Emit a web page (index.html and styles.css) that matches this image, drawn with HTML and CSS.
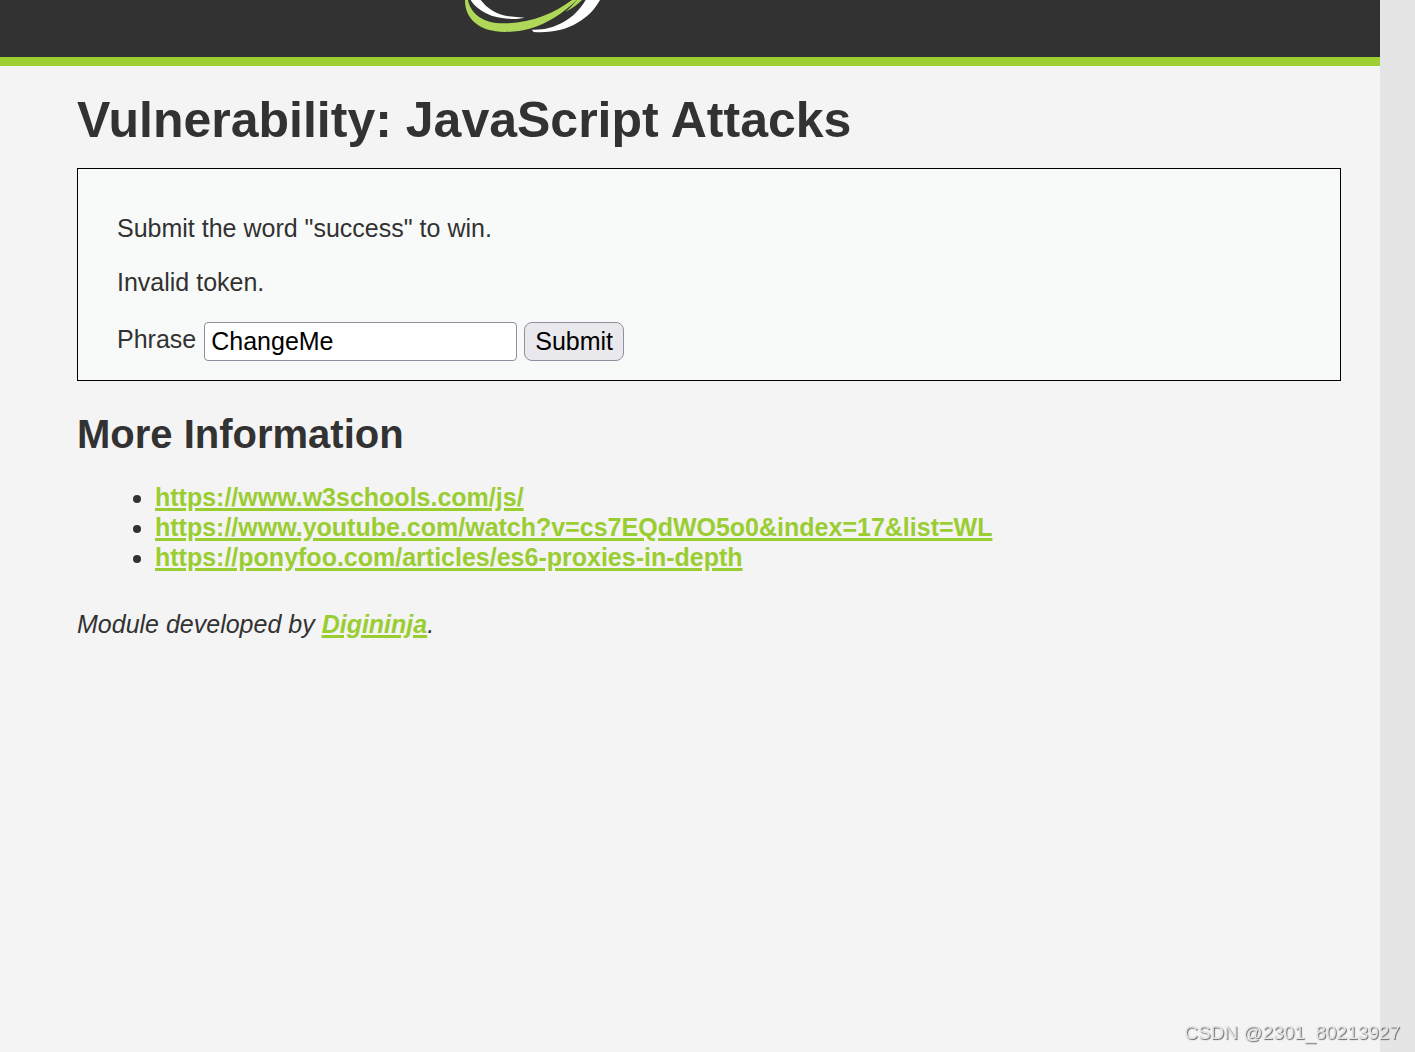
FILE: index.html
```html
<!DOCTYPE html>
<html lang="en">
<head>
<meta charset="utf-8">
<meta name="viewport" content="width=device-width, initial-scale=1">
<title>Vulnerability: JavaScript Attacks</title>
<link rel="stylesheet" href="styles.css">
</head>
<body>
<div class="page">
  <header class="header">
    <svg class="logo" viewBox="0 0 510 99" aria-hidden="true">
      <path fill="#fff" d="M62 0H92C112 26 140 44 176 49L224 53C190 60 142 58 108 40C86 28 70 14 62 0Z"/>
      <path fill="#b0d858" d="M45 0H54C62 42 100 70 160 70C240 70 308 43 366 0H381C330 48 262 96 164 96C90 96 44 58 45 0Z"/>
      <path fill="#b0d858" d="M381 0H396C382 14 366 26 346 36C360 24 370 14 381 0Z"/>
      <path fill="#fff" d="M407 0H450C418 58 350 103 251 96L245 89C310 92 372 60 407 0Z"/>
    </svg>
  </header>
  <main class="content">
    <h1 class="title">Vulnerability: JavaScript Attacks</h1>
    <section class="panel">
      <p class="text">Submit the word "success" to win.</p>
      <p class="text">Invalid token.</p>
      <form class="form">
        <label class="label" for="phrase">Phrase</label>
        <input class="input" type="text" id="phrase" name="phrase" value="ChangeMe">
        <button class="button" type="submit">Submit</button>
      </form>
    </section>
    <h2 class="subtitle">More Information</h2>
    <ul class="links">
      <li><a class="link" href="https://www.w3schools.com/js/">https://www.w3schools.com/js/</a></li>
      <li><a class="link" href="https://www.youtube.com/watch?v=cs7EQdWO5o0&amp;index=17&amp;list=WL">https://www.youtube.com/watch?v=cs7EQdWO5o0&amp;index=17&amp;list=WL</a></li>
      <li><a class="link" href="https://ponyfoo.com/articles/es6-proxies-in-depth">https://ponyfoo.com/articles/es6-proxies-in-depth</a></li>
    </ul>
    <p class="credit">Module developed by <a class="link" href="https://digi.ninja">Digininja</a>.</p>
  </main>
</div>
<div class="watermark">CSDN @2301_80213927</div>
</body>
</html>
```
FILE: styles.css
```css
* {
  box-sizing: border-box;
}

body {
  margin: 0;
  padding-right: 35px;
  background: #e5e5e5;
  color: #323232;
  font: 25px/30px "Liberation Sans", Arial, sans-serif;
}

.page {
  min-height: 100vh;
  background: #f4f4f4;
}

.header {
  height: 66px;
  padding-left: 450px;
  background: #323232;
  border-bottom: 9px solid #9dcf30;
}

.logo {
  display: block;
  width: 170px;
  height: 33px;
}

.content {
  padding: 24px 39px 24px 77px;
}

.title {
  margin: 0 0 18px;
  font-size: 50px;
  line-height: 60px;
}

.panel {
  padding: 44px 39px 20px;
  background: #f8faf9;
  border: 1px solid #000;
}

.text {
  margin: 0 0 24px;
}

.form {
  display: flex;
  align-items: flex-start;
  padding-top: 1px;
}

.label {
  padding-top: 2px;
  margin-right: 8px;
}

.input,
.button {
  height: 39px;
  border: 1px solid #8f8f9d;
  color: #000;
  font: inherit;
}

.input {
  width: 313px;
  min-width: 0;
  margin-right: 7px;
  padding: 0 6px;
  background: #fff;
  border-radius: 4px;
}

.button {
  padding: 0 10px 2px;
  background: #e9e9ed;
  border-radius: 8px;
}

.panel {
  padding-bottom: 19px;
}

.subtitle {
  margin: 29px 0 24px;
  font-size: 40px;
  line-height: 48px;
}

.links {
  margin: 0 0 37px;
  padding-left: 78px;
}

.link {
  color: #9acd32;
  font-weight: bold;
  text-decoration-thickness: 3px;
}

.credit {
  margin: 0;
  font-style: italic;
}

.watermark {
  position: fixed;
  right: 15px;
  bottom: 8px;
  color: #e4e4e4;
  font-size: 19px;
  line-height: 22px;
  text-shadow: 1px 1px 1px #666;
}
```
